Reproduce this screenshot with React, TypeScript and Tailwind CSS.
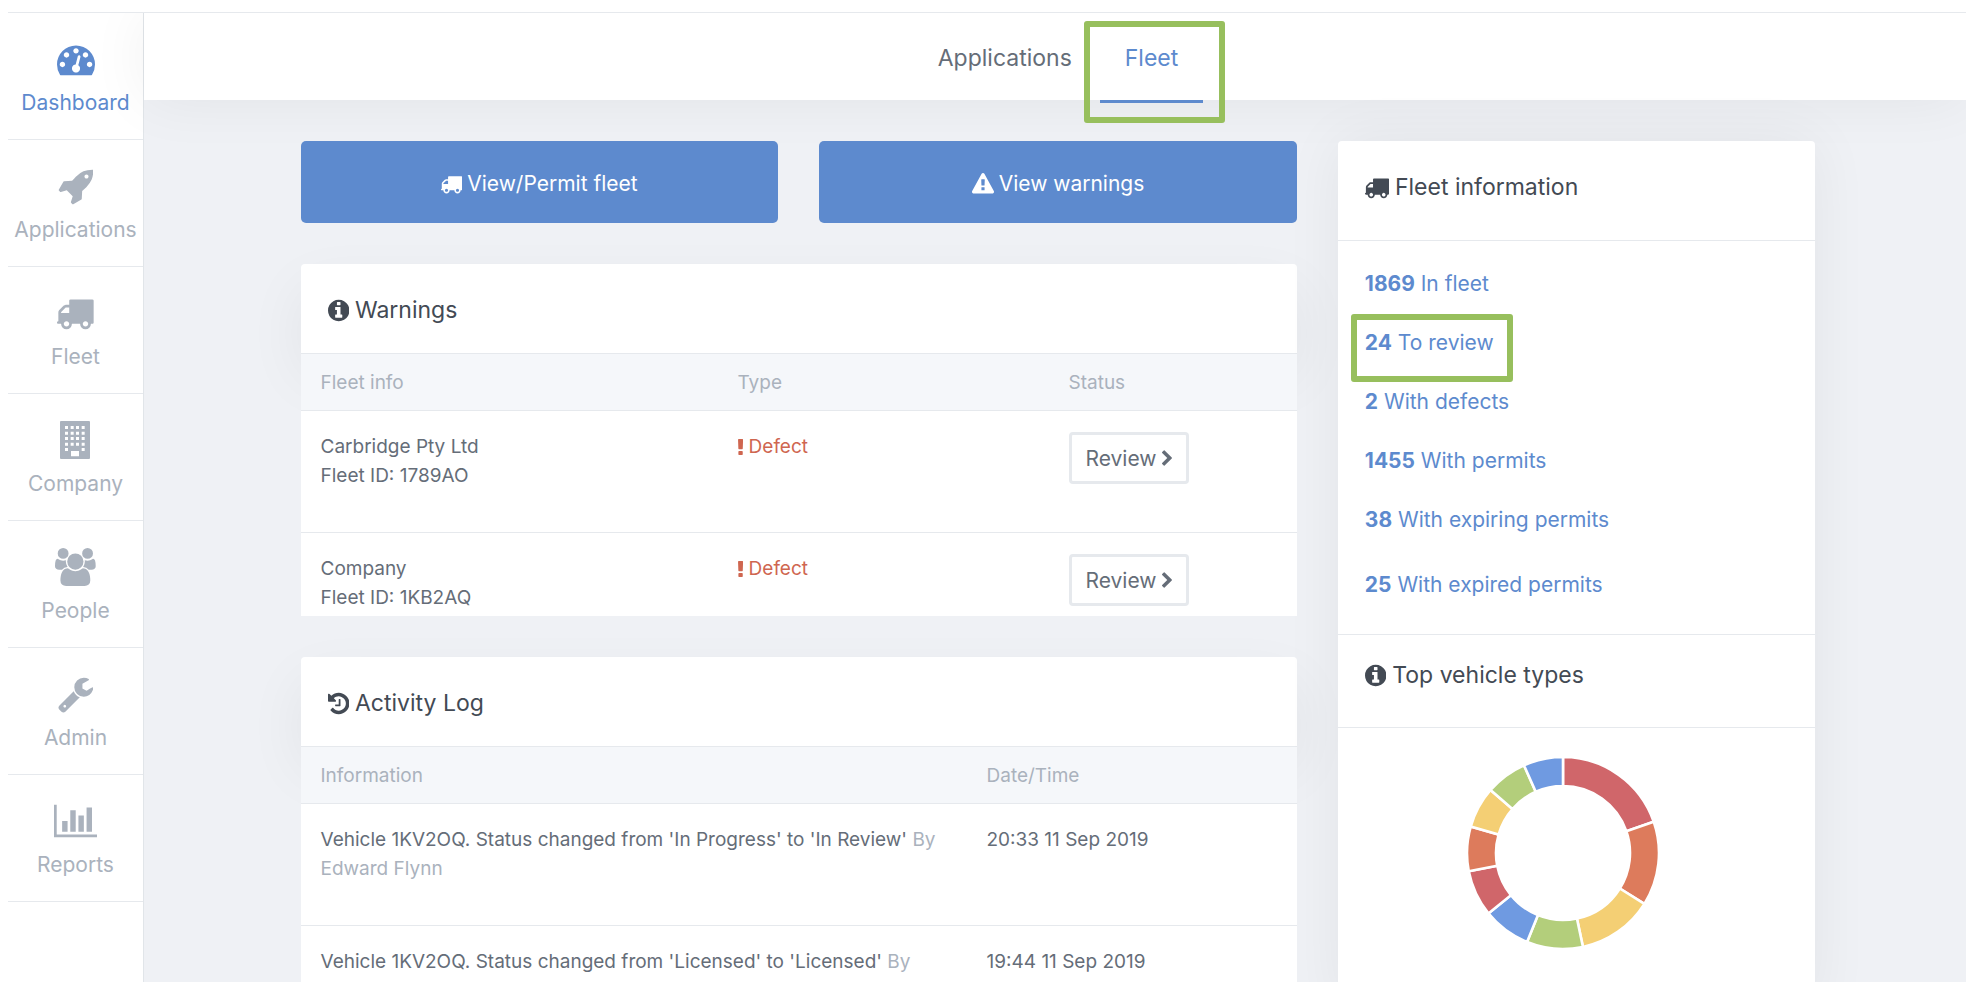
import type { ReactNode } from 'react';

interface IconProps {
  className?: string;
  box: string;
  d: string;
}

function Icon({ className = '', box, d }: IconProps) {
  return (
    <svg viewBox={box} className={`w-auto shrink-0 fill-current ${className}`} aria-hidden="true">
      <path d={d} fillRule="evenodd" />
    </svg>
  );
}

const icons = {
  dashboard: {
    box: '0 0 1792 1792',
    d: 'M384 1152q0-53-37.5-90.5t-90.5-37.5-90.5 37.5-37.5 90.5 37.5 90.5 90.5 37.5 90.5-37.5 37.5-90.5zm192-448q0-53-37.5-90.5t-90.5-37.5-90.5 37.5-37.5 90.5 37.5 90.5 90.5 37.5 90.5-37.5 37.5-90.5zm428 481l101-382q6-26-7.5-48.5t-38.5-29.5-48 6.5-30 39.5l-101 382q-60 5-107 43.5t-63 98.5q-20 77 20 146t117 89 146-20 89-117q16-60-6-117t-72-91zm660-33q0-53-37.5-90.5t-90.5-37.5-90.5 37.5-37.5 90.5 37.5 90.5 90.5 37.5 90.5-37.5 37.5-90.5zm-640-640q0-53-37.5-90.5t-90.5-37.5-90.5 37.5-37.5 90.5 37.5 90.5 90.5 37.5 90.5-37.5 37.5-90.5zm448 192q0-53-37.5-90.5t-90.5-37.5-90.5 37.5-37.5 90.5 37.5 90.5 90.5 37.5 90.5-37.5 37.5-90.5zm320 448q0 261-141 483-19 29-54 29h-1402q-35 0-54-29-141-221-141-483 0-182 71-348t191-286 286-191 348-71 348 71 286 191 191 286 71 348z',
  },
  rocket: {
    box: '0 0 1664 1792',
    d: 'M1440 448q0-40-28-68t-68-28-68 28-28 68 28 68 68 28 68-28 28-68zm224-288q0 249-75.5 430.5t-253.5 360.5q-81 80-195 176l-20 379q-2 16-16 26l-384 224q-7 4-16 4-12 0-23-9l-64-64q-13-14-8-32l85-276-281-281-276 85q-3 1-9 1-14 0-23-9l-64-64q-17-19-5-39l224-384q10-14 26-16l379-20q96-114 176-195 188-187 358-258t431-71q14 0 24 9.5t10 22.5z',
  },
  truck: {
    box: '64 0 1728 1792',
    d: 'M640 1408q0-52-38-90t-90-38-90 38-38 90 38 90 90 38 90-38 38-90zm-384-512h384v-256h-158q-13 0-22 9l-195 195q-9 9-9 22v30zm1280 512q0-52-38-90t-90-38-90 38-38 90 38 90 90 38 90-38 38-90zm256-1088v1024q0 15-4 26.5t-13.5 18.5-16.5 11.5-23.5 6-22.5 2-25.5 0-22.5-.5q0 106-75 181t-181 75-181-75-75-181h-384q0 106-75 181t-181 75-181-75-75-181h-64q-3 0-22.5.5t-25.5 0-22.5-2-23.5-6-16.5-11.5-13.5-18.5-4-26.5q0-26 19-45t45-19v-320q0-8-.5-35t0-38 2.5-34.5 6.5-37 14-30.5 22.5-30l198-198q19-19 50.5-32t58.5-13h160v-192q0-26 19-45t45-19h1024q26 0 45 19t19 45z',
  },
  building: {
    box: '-3 0 102 114',
    d: 'M3 0h84q3 0 3 3v108q0 3-3 3h-84q-3 0-3-3v-108q0-3 3-3zM15 15v9h9v-9zM32 15v9h9v-9zM48 15v9h9v-9zM65 15v9h9v-9zM15 32v9h9v-9zM32 32v9h9v-9zM48 32v9h9v-9zM65 32v9h9v-9zM15 48v9h9v-9zM32 48v9h9v-9zM48 48v9h9v-9zM65 48v9h9v-9zM15 65v9h9v-9zM32 65v9h9v-9zM48 65v9h9v-9zM65 65v9h9v-9zM15 81v9h9v-9zM65 81v9h9v-9zM33 90v16h24v-16z',
  },
  users: {
    box: '64 0 1920 1792',
    d: 'M657 896q-162 5-265 128h-134q-82 0-138-40.5t-56-118.5q0-353 124-353 6 0 43.5 21t97.5 42.5 119 21.5q67 0 133-23-5 37-5 66 0 139 81 256zm1071 637q0 120-73 189.5t-194 69.5h-874q-121 0-194-69.5t-73-189.5q0-53 3.5-103.5t14-109 26.5-108.5 43-97.5 62-81 85.5-53.5 111.5-20q10 0 43 21.5t73 48 107 48 135 21.5 135-21.5 107-48 73-48 43-21.5q61 0 111.5 20t85.5 53.5 62 81 43 97.5 26.5 108.5 14 109 3.5 103.5zm-1024-1277q0 106-75 181t-181 75-181-75-75-181 75-181 181-75 181 75 75 181zm704 384q0 159-112.5 271.5t-271.5 112.5-271.5-112.5-112.5-271.5 112.5-271.5 271.5-112.5 271.5 112.5 112.5 271.5zm576 225q0 78-56 118.5t-138 40.5h-134q-103-123-265-128 81-117 81-256 0-29-5-66 66 23 133 23 59 0 119-21.5t97.5-42.5 43.5-21q124 0 124 353zm-128-609q0 106-75 181t-181 75-181-75-75-181 75-181 181-75 181 75 75 181z',
  },
  wrench: {
    box: '64 0 1664 1792',
    d: 'M448 1472q0-26-19-45t-45-19-45 19-19 45 19 45 45 19 45-19 19-45zm644-420l-682 682q-37 37-90 37-52 0-91-37l-106-108q-38-36-38-90 0-53 38-91l681-681q39 98 114.5 173.5t173.5 114.5zm634-435q0 39-23 106-47 134-164.5 217.5t-258.5 83.5q-185 0-316.5-131.5t-131.5-316.5 131.5-316.5 316.5-131.5q58 0 121.5 16.5t107.5 46.5q16 11 16 28t-16 28l-293 169v224l193 107q5-3 79-48.5t135.5-81 70.5-35.5q15 0 23.5 10t8.5 25z',
  },
  chart: {
    box: '0 0 2048 1792',
    d: 'M640 896v512h-256v-512h256zm384-512v1024h-256v-1024h256zm1024 1152v128h-2048v-1536h128v1408h1920zm-640-896v768h-256v-768h256zm384-384v1152h-256v-1152h256z',
  },
  info: {
    box: '128 0 1536 1792',
    d: 'M1152 1376v-160q0-14-9-23t-23-9h-96v-512q0-14-9-23t-23-9h-320q-14 0-23 9t-9 23v160q0 14 9 23t23 9h96v320h-96q-14 0-23 9t-9 23v160q0 14 9 23t23 9h448q14 0 23-9t9-23zm-128-896v-160q0-14-9-23t-23-9h-192q-14 0-23 9t-9 23v160q0 14 9 23t23 9h192q14 0 23-9t9-23zm640 416q0 209-103 385.5t-279.5 279.5-385.5 103-385.5-103-279.5-279.5-103-385.5 103-385.5 279.5-279.5 385.5-103 385.5 103 279.5 279.5 103 385.5z',
  },
  history: {
    box: '128 0 1536 1792',
    d: 'M1664 896q0 156-61 298t-164 245-245 164-298 61q-172 0-327-72.5t-264-204.5q-7-10-6.5-22.5t8.5-20.5l137-138q10-9 25-9 16 2 23 12 73 95 179 147t225 52q104 0 198.5-40.5t163.5-109.5 109.5-163.5 40.5-198.5-40.5-198.5-109.5-163.5-163.5-109.5-198.5-40.5q-98 0-188 35.5t-160 101.5l137 138q31 30 14 69-17 40-59 40h-448q-26 0-45-19t-19-45v-448q0-42 40-59 39-17 69 14l130 129q107-101 244.5-156.5t284.5-55.5q156 0 298 61t245 164 164 245 61 298zm-640-288v448q0 14-9 23t-23 9h-320q-14 0-23-9t-9-23v-64q0-14 9-23t23-9h224v-352q0-14 9-23t23-9h64q14 0 23 9t9 23z',
  },
  warning: {
    box: '0 0 1792 1792',
    d: 'M1024 1375v-190q0-14-9.5-23.5t-22.5-9.5h-192q-13 0-22.5 9.5t-9.5 23.5v190q0 14 9.5 23.5t22.5 9.5h192q13 0 22.5-9.5t9.5-23.5zm-2-374l18-459q0-12-10-19-13-11-24-11h-220q-11 0-24 11-10 7-10 21l17 457q0 10 10 16.5t24 6.5h185q14 0 23.5-6.5t10.5-16.5zm-14-934l768 1408q35 63-2 126-17 29-46.5 46t-63.5 17h-1536q-34 0-63.5-17t-46.5-46q-37-63-2-126l768-1408q17-31 47-49t65-18 65 18 47 49z',
  },
  exclamation: {
    box: '670 128 450 1408',
    d: 'M1088 1248v224q0 26-19 45t-45 19h-256q-26 0-45-19t-19-45v-224q0-26 19-45t45-19h256q26 0 45 19t19 45zm30-1056l-28 768q-1 26-20.5 45t-45.5 19h-256q-26 0-45.5-19t-20.5-45l-28-768q-1-26 17.5-45t44.5-19h320q26 0 44.5 19t17.5 45z',
  },
  chevron: {
    box: '346 0 1036 1664',
    d: 'M1363 877l-742 742q-19 19-45 19t-45-19l-166-166q-19-19-19-45t19-45l531-531-531-531q-19-19-19-45t19-45l166-166q19-19 45-19t45 19l742 742q19 19 19 45t-19 45z',
  },
};

const navItems = [
  { label: 'Dashboard', icon: icons.dashboard, active: true },
  { label: 'Applications', icon: icons.rocket },
  { label: 'Fleet', icon: icons.truck },
  { label: 'Company', icon: icons.building },
  { label: 'People', icon: icons.users },
  { label: 'Admin', icon: icons.wrench },
  { label: 'Reports', icon: icons.chart },
];

const warnings = [
  { company: 'Carbridge Pty Ltd', fleetId: '1789AO' },
  { company: 'Company', fleetId: '1KB2AQ' },
];

const activity = [
  { text: "Vehicle 1KV2OQ. Status changed from 'In Progress' to 'In Review'", by: 'Edward Flynn', time: '20:33 11 Sep 2019' },
  { text: "Vehicle 1KV2OQ. Status changed from 'Licensed' to 'Licensed'", by: 'Edward Flynn', time: '19:44 11 Sep 2019' },
];

const fleetStats = [
  { count: 1869, label: 'In fleet' },
  { count: 24, label: 'To review', marked: true },
  { count: 2, label: 'With defects' },
  { count: 1455, label: 'With permits' },
  { count: 38, label: 'With expiring permits' },
  { count: 25, label: 'With expired permits' },
];

// share of the ring, in degrees
const vehicleTypes = [
  { size: 71, color: '#d0666a' },
  { size: 51, color: '#dd7b5c' },
  { size: 46, color: '#f4cf74' },
  { size: 34, color: '#b3ce7b' },
  { size: 29, color: '#6f9ae1' },
  { size: 28, color: '#d0666a' },
  { size: 27, color: '#dd7b5c' },
  { size: 25, color: '#f4cf74' },
  { size: 25, color: '#b3ce7b' },
  { size: 24, color: '#6f9ae1' },
];

function point(radius: number, degrees: number) {
  const rad = ((degrees - 90) * Math.PI) / 180;
  return `${(radius * Math.cos(rad)).toFixed(2)} ${(radius * Math.sin(rad)).toFixed(2)}`;
}

function DonutChart() {
  let start = 0;
  return (
    <svg viewBox="-97 -97 194 194" className="h-[194px] w-[194px]" role="img" aria-label="Top vehicle types">
      {vehicleTypes.map((type, i) => {
        const from = start;
        const to = start + type.size;
        start = to;
        return (
          <path
            key={i}
            d={`M${point(96, from)}A96 96 0 0 1 ${point(96, to)}L${point(67, to)}A67 67 0 0 0 ${point(67, from)}Z`}
            fill={type.color}
            stroke="#fff"
            strokeWidth="2.6"
          />
        );
      })}
    </svg>
  );
}

function Sidebar() {
  return (
    <nav className="w-[136px] shrink-0 border-r border-[#e1e5e9] bg-white">
      {navItems.map(({ label, icon, active }) => (
        <a
          key={label}
          href="#"
          className={`flex h-[127px] flex-col items-center border-b border-[#e6e9ed] pt-[27px] text-[21px] leading-[34px] ${active ? 'text-[#5d8ace]' : 'text-[#aab2bd]'}`}
        >
          <Icon {...icon} className="h-[38px]" />
          <span className="mt-2">{label}</span>
        </a>
      ))}
    </nav>
  );
}

function Card({ icon, title, children }: { icon: IconProps; title: string; children: ReactNode }) {
  return (
    <section>
      <h2 className="flex h-[90px] items-center gap-[6px] rounded-t-[4px] border-b border-[#e6e9ed] bg-white px-[27px] pt-[3px] text-[23px] text-[#434a54] shadow-[0_24px_60px_rgba(0,0,0,0.06)]">
        <Icon {...icon} className="h-[25px]" />
        {title}
      </h2>
      <div className="relative h-[262px] overflow-hidden bg-white">{children}</div>
    </section>
  );
}

function Th({ className = '', children }: { className?: string; children: ReactNode }) {
  return (
    <th scope="col" className={`h-[57px] border-b border-[#e6e9ed] bg-[#f5f7fa] px-5 pt-[3px] text-left text-[19px] font-normal text-[#aab2bd] ${className}`}>
      {children}
    </th>
  );
}

function Td({ children }: { children: ReactNode }) {
  return <td className="h-[122px] border-b border-[#e6e9ed] px-5 pt-[21px] align-top leading-[29px]">{children}</td>;
}

function WarningsTable() {
  return (
    <table className="w-full table-fixed border-separate border-spacing-0 text-[19px] text-[#656d78]">
      <thead>
        <tr>
          <Th className="w-[417px]">Fleet info</Th>
          <Th className="w-[331px]">Type</Th>
          <Th>Status</Th>
        </tr>
      </thead>
      <tbody>
        {warnings.map((row) => (
          <tr key={row.fleetId}>
            <Td>
              {row.company}
              <br />
              Fleet ID: {row.fleetId}
            </Td>
            <Td>
              <span className="flex items-center gap-[6px] text-[#cf6650]">
                <Icon {...icons.exclamation} className="h-4" />
                Defect
              </span>
            </Td>
            <Td>
              <button className="flex h-[52px] items-center gap-[6px] rounded-[4px] border-[3px] border-[#e6e9ed] bg-white px-[14px] text-[21px]">
                Review
                <Icon {...icons.chevron} className="h-4" />
              </button>
            </Td>
          </tr>
        ))}
      </tbody>
    </table>
  );
}

function ActivityTable() {
  return (
    <table className="w-full table-fixed border-separate border-spacing-0 text-[19px] text-[#656d78]">
      <thead>
        <tr>
          <Th className="w-[666px]">Information</Th>
          <Th>Date/Time</Th>
        </tr>
      </thead>
      <tbody>
        {activity.map((row) => (
          <tr key={row.time}>
            <Td>
              {row.text} <span className="text-[#aab2bd]">By {row.by}</span>
            </Td>
            <Td>{row.time}</Td>
          </tr>
        ))}
      </tbody>
    </table>
  );
}

function FleetPanel() {
  return (
    <aside className="rounded-[4px] bg-white text-[#434a54] shadow-[0_0_60px_rgba(0,0,0,0.06)]">
      <h2 className="flex h-[100px] items-center gap-[6px] border-b border-[#e6e9ed] px-[27px] pb-[6px] text-[23px]">
        <Icon {...icons.truck} className="h-[25px]" />
        Fleet information
      </h2>
      <ul className="border-b border-[#e6e9ed] px-[27px] pt-[13px] pb-[14px] text-[21px] text-[#5d8ace]">
        {fleetStats.map((stat) => (
          <li key={stat.label} className="flex h-[59px] items-center last:h-[71px]">
            <a href="#" className="relative">
              <b>{stat.count}</b> {stat.label}
              {stat.marked && (
                <span className="absolute -top-[13px] -left-[14px] h-[68px] w-[162px] rounded-[3px] border-[6px] border-[#97bf5d]" />
              )}
            </a>
          </li>
        ))}
      </ul>
      <h2 className="flex h-[93px] items-center gap-[6px] border-b border-[#e6e9ed] px-[27px] pb-3 text-[23px]">
        <Icon {...icons.info} className="h-[25px]" />
        Top vehicle types
      </h2>
      <div className="flex justify-center py-7 pr-7">
        <DonutChart />
      </div>
    </aside>
  );
}

export default function App() {
  return (
    <div className="flex h-screen flex-col overflow-hidden bg-white pt-3 pl-2 font-['Inter',sans-serif]">
      <div className="flex grow overflow-hidden border-t border-[#e6e9ed]">
        <Sidebar />
        <div className="flex min-w-0 grow flex-col bg-[#eff1f5]">
          <header className="flex h-[87px] shrink-0 justify-center gap-[3px] bg-white pl-[6px] text-[23px] leading-[90px] shadow-[0_0_60px_rgba(0,0,0,0.06)]">
            <a href="#" className="h-[90px] px-[25px] text-[#656d78]">Applications</a>
            <a href="#" className="relative h-[90px] border-b-[3px] border-[#5d8ace] px-[25px] text-[#5d8ace]">
              Fleet
              <span className="absolute top-2 -right-[22px] -left-[16px] h-[102px] rounded-[3px] border-[6px] border-[#97bf5d]" />
            </a>
          </header>
          <main className="h-0 grow pt-[41px] pl-[6px]">
            <div className="mx-auto grid max-w-[1515px] grid-cols-3 gap-[41px]">
              <div className="col-span-2 grid grid-cols-2 content-start gap-[41px]">
                <button className="flex h-[82px] items-center justify-center gap-[5px] rounded-[5px] bg-[#5d8ace] pt-[3px] text-[21px] text-white">
                  <Icon {...icons.truck} className="h-[22px]" />
                  View/Permit fleet
                </button>
                <button className="flex h-[82px] items-center justify-center gap-[5px] rounded-[5px] bg-[#5d8ace] pt-[3px] text-[21px] text-white">
                  <Icon {...icons.warning} className="h-[22px]" />
                  View warnings
                </button>
                <div className="col-span-2 flex flex-col gap-[41px]">
                  <Card icon={icons.info} title="Warnings">
                    <WarningsTable />
                  </Card>
                  <Card icon={icons.history} title="Activity Log">
                    <ActivityTable />
                  </Card>
                </div>
              </div>
              <FleetPanel />
            </div>
          </main>
        </div>
      </div>
    </div>
  );
}
